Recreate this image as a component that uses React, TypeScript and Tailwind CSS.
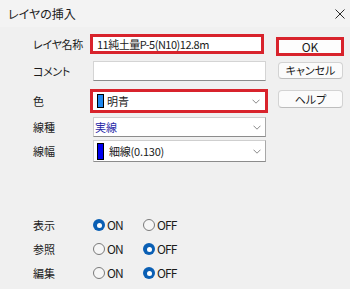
import React from "react";

function Chevron() {
  return (
    <svg width="8" height="5" viewBox="0 0 8 5" className="shrink-0">
      <polyline points="0.5,0.7 4,4.2 7.5,0.7" fill="none" stroke="#8a8a8a" strokeWidth="1" />
    </svg>
  );
}

function Radio({ checked, label }: { checked: boolean; label: string }) {
  return (
    <div className="flex items-center w-[50px]">
      {checked ? (
        <div className="w-[12px] h-[12px] rounded-full bg-[#0a5fb4] flex items-center justify-center shrink-0">
          <div className="w-[5px] h-[5px] rounded-full bg-white" />
        </div>
      ) : (
        <div className="w-[12px] h-[12px] rounded-full border border-[#7a7a7a] bg-[#f6f6f6] shrink-0" />
      )}
      <span className="ml-[2px] text-[12px] tracking-[-0.9px] text-[#1b1b1b]">{label}</span>
    </div>
  );
}

export default function App() {
  return (
    <div className="w-[350px] h-[289px] bg-[#f0f0f0] font-['Noto_Sans_CJK_JP',sans-serif] text-[11px] text-[#1b1b1b] [font-feature-settings:'palt'] overflow-hidden">
      <div className="h-[27px] bg-[#f3f3f3] flex items-center justify-between pl-[8px] pr-[5px]">
        <span className="text-[12px] text-[#1b1b1b]">レイヤの挿入</span>
        <svg width="10" height="10" viewBox="0 0 10 10">
          <line x1="0.5" y1="0.5" x2="9.5" y2="9.5" stroke="#2b2b2b" strokeWidth="1" />
          <line x1="9.5" y1="0.5" x2="0.5" y2="9.5" stroke="#2b2b2b" strokeWidth="1" />
        </svg>
      </div>

      <div className="flex">
        <div className="w-[270px] pt-[7px] flex flex-col">
          <div className="flex items-center pl-[33px]">
            <span className="w-[57px] shrink-0 tracking-[-0.3px]">レイヤ名称</span>
            <div className="w-[174px] h-[20px] border-[3px] border-[#d8232c] bg-white flex items-center pl-[4px]">
              <span className="leading-none tracking-[-0.5px]">11純土量P-5(N10)12.8m</span>
            </div>
          </div>

          <div className="flex items-center pl-[33px] mt-[7px]">
            <span className="w-[57px] shrink-0 tracking-[-0.3px]">コメント</span>
            <div className="ml-[3px] w-[173px] h-[20px] bg-white border border-[#d4d4d4] border-b-[#8c8c8c]" />
          </div>

          <div className="flex items-center pl-[33px] mt-[8px]">
            <span className="w-[57px] shrink-0">色</span>
            <div className="w-[178px] h-[24px] border-[3px] border-[#d8232c] bg-white flex items-center pl-[4px] pr-[5px]">
              <div className="w-[7px] h-[14px] bg-[#1e88f0] border border-black shrink-0" />
              <span className="ml-[3px] leading-none flex-1">明青</span>
              <Chevron />
            </div>
          </div>

          <div className="flex items-center pl-[33px] mt-[4px]">
            <span className="w-[57px] shrink-0">線種</span>
            <div className="ml-[3px] w-[173px] h-[20px] bg-white border border-[#cfcfcf] border-r-[#a8a8a8] border-b-[#8c8c8c] flex items-center pl-[1px] pr-[4px]">
              <span className="leading-none flex-1 text-[#2a2aa8]">実線</span>
              <Chevron />
            </div>
          </div>

          <div className="flex items-center pl-[33px] mt-[3px]">
            <span className="w-[57px] shrink-0">線幅</span>
            <div className="ml-[3px] w-[173px] h-[22px] bg-white border border-[#cfcfcf] border-r-[#a8a8a8] border-b-[#8c8c8c] flex items-center pl-[3px] pr-[4px]">
              <div className="w-[7px] h-[17px] bg-[#0000f0] border border-black shrink-0" />
              <span className="ml-[5px] leading-none flex-1 tracking-[-0.2px]">細線(0.130)</span>
              <Chevron />
            </div>
          </div>
        </div>

        <div className="flex flex-col pt-[10px] pl-[6px]">
          <div className="w-[68px] h-[19px] border-[3px] border-[#d8232c] bg-[#fdfdfd] flex items-center justify-center">
            <span className="leading-none text-[12px]">OK</span>
          </div>
          <div className="ml-[2px] mt-[6px] w-[65px] h-[17px] rounded-[4px] border border-[#d3d3d3] border-b-[#bdbdbd] bg-[#fbfbfb] flex items-center justify-center">
            <span className="leading-none">キャンセル</span>
          </div>
          <div className="ml-[2px] mt-[11px] w-[65px] h-[18px] rounded-[4px] border border-[#d3d3d3] border-b-[#bdbdbd] bg-[#fbfbfb] flex items-center justify-center">
            <span className="leading-none">ヘルプ</span>
          </div>
        </div>
      </div>

      <div className="mt-[51px] flex flex-col pl-[33px]">
        {[
          ["表示", true],
          ["参照", false],
          ["編集", false],
        ].map(([label, on]) => (
          <div key={label as string} className="h-[24px] flex items-center">
            <span className="w-[60px] shrink-0">{label as string}</span>
            <Radio checked={on as boolean} label="ON" />
            <Radio checked={!(on as boolean)} label="OFF" />
          </div>
        ))}
      </div>
    </div>
  );
}
